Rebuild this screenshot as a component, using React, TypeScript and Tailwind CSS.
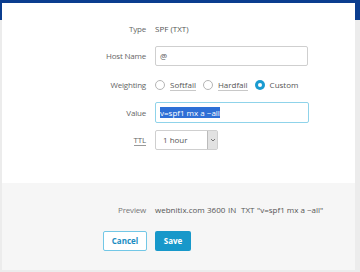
import React from 'react';

const Radio = ({ label, checked }: { label: string; checked?: boolean }) => (
  <label className="flex items-center gap-[5px]">
    {checked ? (
      <span className="w-[10px] h-[10px] rounded-full bg-[#1a9bd0] flex items-center justify-center">
        <span className="w-[4px] h-[4px] rounded-full bg-white" />
      </span>
    ) : (
      <span className="w-[10px] h-[10px] rounded-full border border-[#b5b5b5] bg-white" />
    )}
    <span className={checked ? '' : 'border-b border-[#c8c8c8] leading-[10px]'}>{label}</span>
  </label>
);

const Row = ({ label, children, className }: { label: React.ReactNode; children: React.ReactNode; className?: string }) => (
  <div className={'grid grid-cols-[144px_1fr] gap-x-[9px] items-center h-[20px] ' + (className || '')}>
    <div className="text-right text-[#666] tracking-[-0.2px]">{label}</div>
    <div className="flex items-center h-full">{children}</div>
  </div>
);

const App = () => {
  return (
    <div
      className="w-[360px] h-[272px] bg-[linear-gradient(#0b3d8f_20px,#ececec_20px)] pt-[3px] pl-[2px] pr-[5px] text-[8px] text-[#555]"
      style={{ fontFamily: '"Open Sans", "Noto Sans", sans-serif' }}
    >
      <div className="bg-white h-[267px] flex flex-col">
        <div className="h-[180px] pt-[16px]">
          <Row label="Type">
            <span>SPF (TXT)</span>
          </Row>
          <Row label="Host Name" className="mt-[7px]">
            <div className="w-[153px] h-[20px] border border-[#cfcfcf] rounded-[2px] flex items-center pl-[4px]">@</div>
          </Row>
          <Row label="Weighting" className="mt-[9px]">
            <div className="flex items-center gap-[7px]">
              <Radio label="Softfail" />
              <Radio label="Hardfail" />
              <Radio label="Custom" checked />
            </div>
          </Row>
          <Row label="Value" className="mt-[7px] h-[21px]">
            <div className="w-[154px] h-[21px] border border-[#8fd3ea] rounded-[2px] flex items-center pl-[4px]">
              <span className="bg-[#2e6fd6] text-white leading-[11px]">v=spf1 mx a ~all</span>
            </div>
          </Row>
          <Row label={<span className="border-b border-[#999] leading-[10px]">TTL</span>} className="mt-[7px]">
            <div className="w-[63px] h-[20px] border border-[#cfcfcf] rounded-[2px] flex items-stretch">
              <span className="flex-1 flex items-center pl-[7px]">1 hour</span>
              <span className="w-[10px] bg-[#e2e2e2] border-l border-[#bbb] flex items-center justify-center">
                <svg width="6" height="4" viewBox="0 0 6 4">
                  <path d="M1 1l2 2 2-2" stroke="#777" strokeWidth="1" fill="none" />
                </svg>
              </span>
            </div>
          </Row>
        </div>
        <div className="flex-1 bg-[#f6f6f6] pt-[17px]">
          <div className="grid grid-cols-[144px_1fr] gap-x-[9px] items-center h-[20px]">
            <div className="text-right text-[#777] tracking-[-0.2px]">Preview</div>
            <div className="flex whitespace-nowrap text-[#555]">
              <span className="w-[52px]">webnitix.com</span>
              <span className="w-[21px]">3600</span>
              <span className="w-[13px]">IN</span>
              <span className="w-[16px]">TXT</span>
              <span>"v=spf1 mx a ~all"</span>
            </div>
          </div>
          <div className="grid grid-cols-[145px_1fr] gap-x-[8px] mt-[11px]">
            <div className="flex justify-end">
              <button className="w-[44px] h-[20px] border border-[#72c7e6] rounded-[2px] bg-white text-[#1a8cc2] font-bold">
                Cancel
              </button>
            </div>
            <div>
              <button className="w-[36px] h-[20px] rounded-[2px] bg-[#1798ca] text-white font-bold">Save</button>
            </div>
          </div>
        </div>
      </div>
    </div>
  );
};

export default App;
